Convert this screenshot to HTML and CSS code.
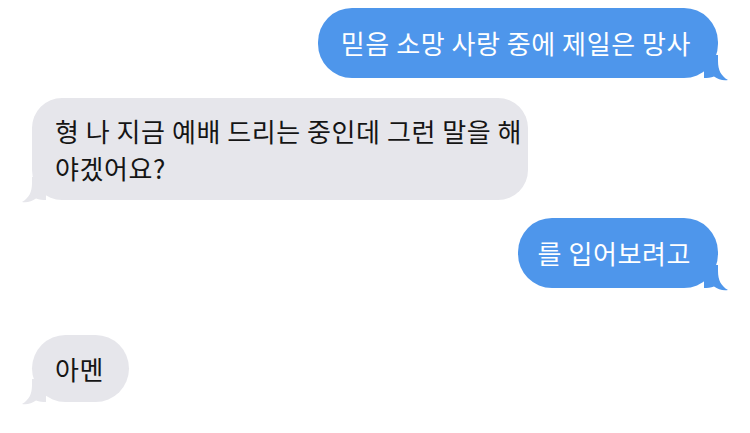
FILE: index.html
```html
<!DOCTYPE html>
<html lang="ko">
<head>
<meta charset="utf-8">
<link rel="stylesheet" href="styles.css">
</head>
<body>
<div class="thread">
  <div class="row sent">
    <div class="bubble blue">믿음 소망 사랑 중에 제일은 망사<svg class="tail" viewBox="0 0 24 26" aria-hidden="true"><path d="M0 0H14V6C14 15 17 21 24 25C19 25.8 14 24.5 10 21.5C7 23 3 23 0 23Z"/></svg></div>
  </div>
  <div class="row received gap-20">
    <div class="bubble gray wide">형 나 지금 예배 드리는 중인데 그런 말을 해<br>야겠어요?<svg class="tail" viewBox="0 0 24 26" aria-hidden="true"><path d="M0 0H14V6C14 15 17 21 24 25C19 25.8 14 24.5 10 21.5C7 23 3 23 0 23Z"/></svg></div>
  </div>
  <div class="row sent gap-18">
    <div class="bubble blue short">를 입어보려고<svg class="tail" viewBox="0 0 24 26" aria-hidden="true"><path d="M0 0H14V6C14 15 17 21 24 25C19 25.8 14 24.5 10 21.5C7 23 3 23 0 23Z"/></svg></div>
  </div>
  <div class="row received gap-47">
    <div class="bubble gray">아멘<svg class="tail" viewBox="0 0 24 26" aria-hidden="true"><path d="M0 0H14V6C14 15 17 21 24 25C19 25.8 14 24.5 10 21.5C7 23 3 23 0 23Z"/></svg></div>
  </div>
</div>
</body>
</html>
```

FILE: styles.css
```css
html, body {
  margin: 0;
  padding: 0;
  background: #ffffff;
}

.thread {
  width: 750px;
  height: 433px;
  box-sizing: border-box;
  padding: 8px 32px 0 32px;
  display: flex;
  flex-direction: column;
  font-family: "Noto Sans CJK KR", "Noto Sans", sans-serif;
  font-size: 26px;
  letter-spacing: 0.6px;
  word-spacing: -1.6px;
  line-height: 37px;
  overflow: hidden;
}

.row {
  display: flex;
}

.sent { justify-content: flex-end; }
.received { justify-content: flex-start; }

.gap-20 { margin-top: 20px; }
.gap-18 { margin-top: 18px; }
.gap-47 { margin-top: 47px; }

.bubble {
  position: relative;
  border-radius: 34px;
  padding: 16px 27px 17px 23px;
}

.blue {
  background: #4e96eb;
  color: #ffffff;
  fill: #4e96eb;
}

.blue.short {
  padding-left: 20px;
}

.gray {
  background: #e6e6eb;
  color: #151515;
  fill: #e6e6eb;
  padding: 15px 25px 15px 23px;
}

.gray.wide {
  border-radius: 30px;
  padding: 14px 6px 14px 23px;
}

.tail {
  position: absolute;
  width: 24px;
  height: 26px;
  bottom: -3px;
}

.blue .tail {
  right: -10px;
}

.gray .tail {
  left: -10px;
  transform: scaleX(-1);
}
```
